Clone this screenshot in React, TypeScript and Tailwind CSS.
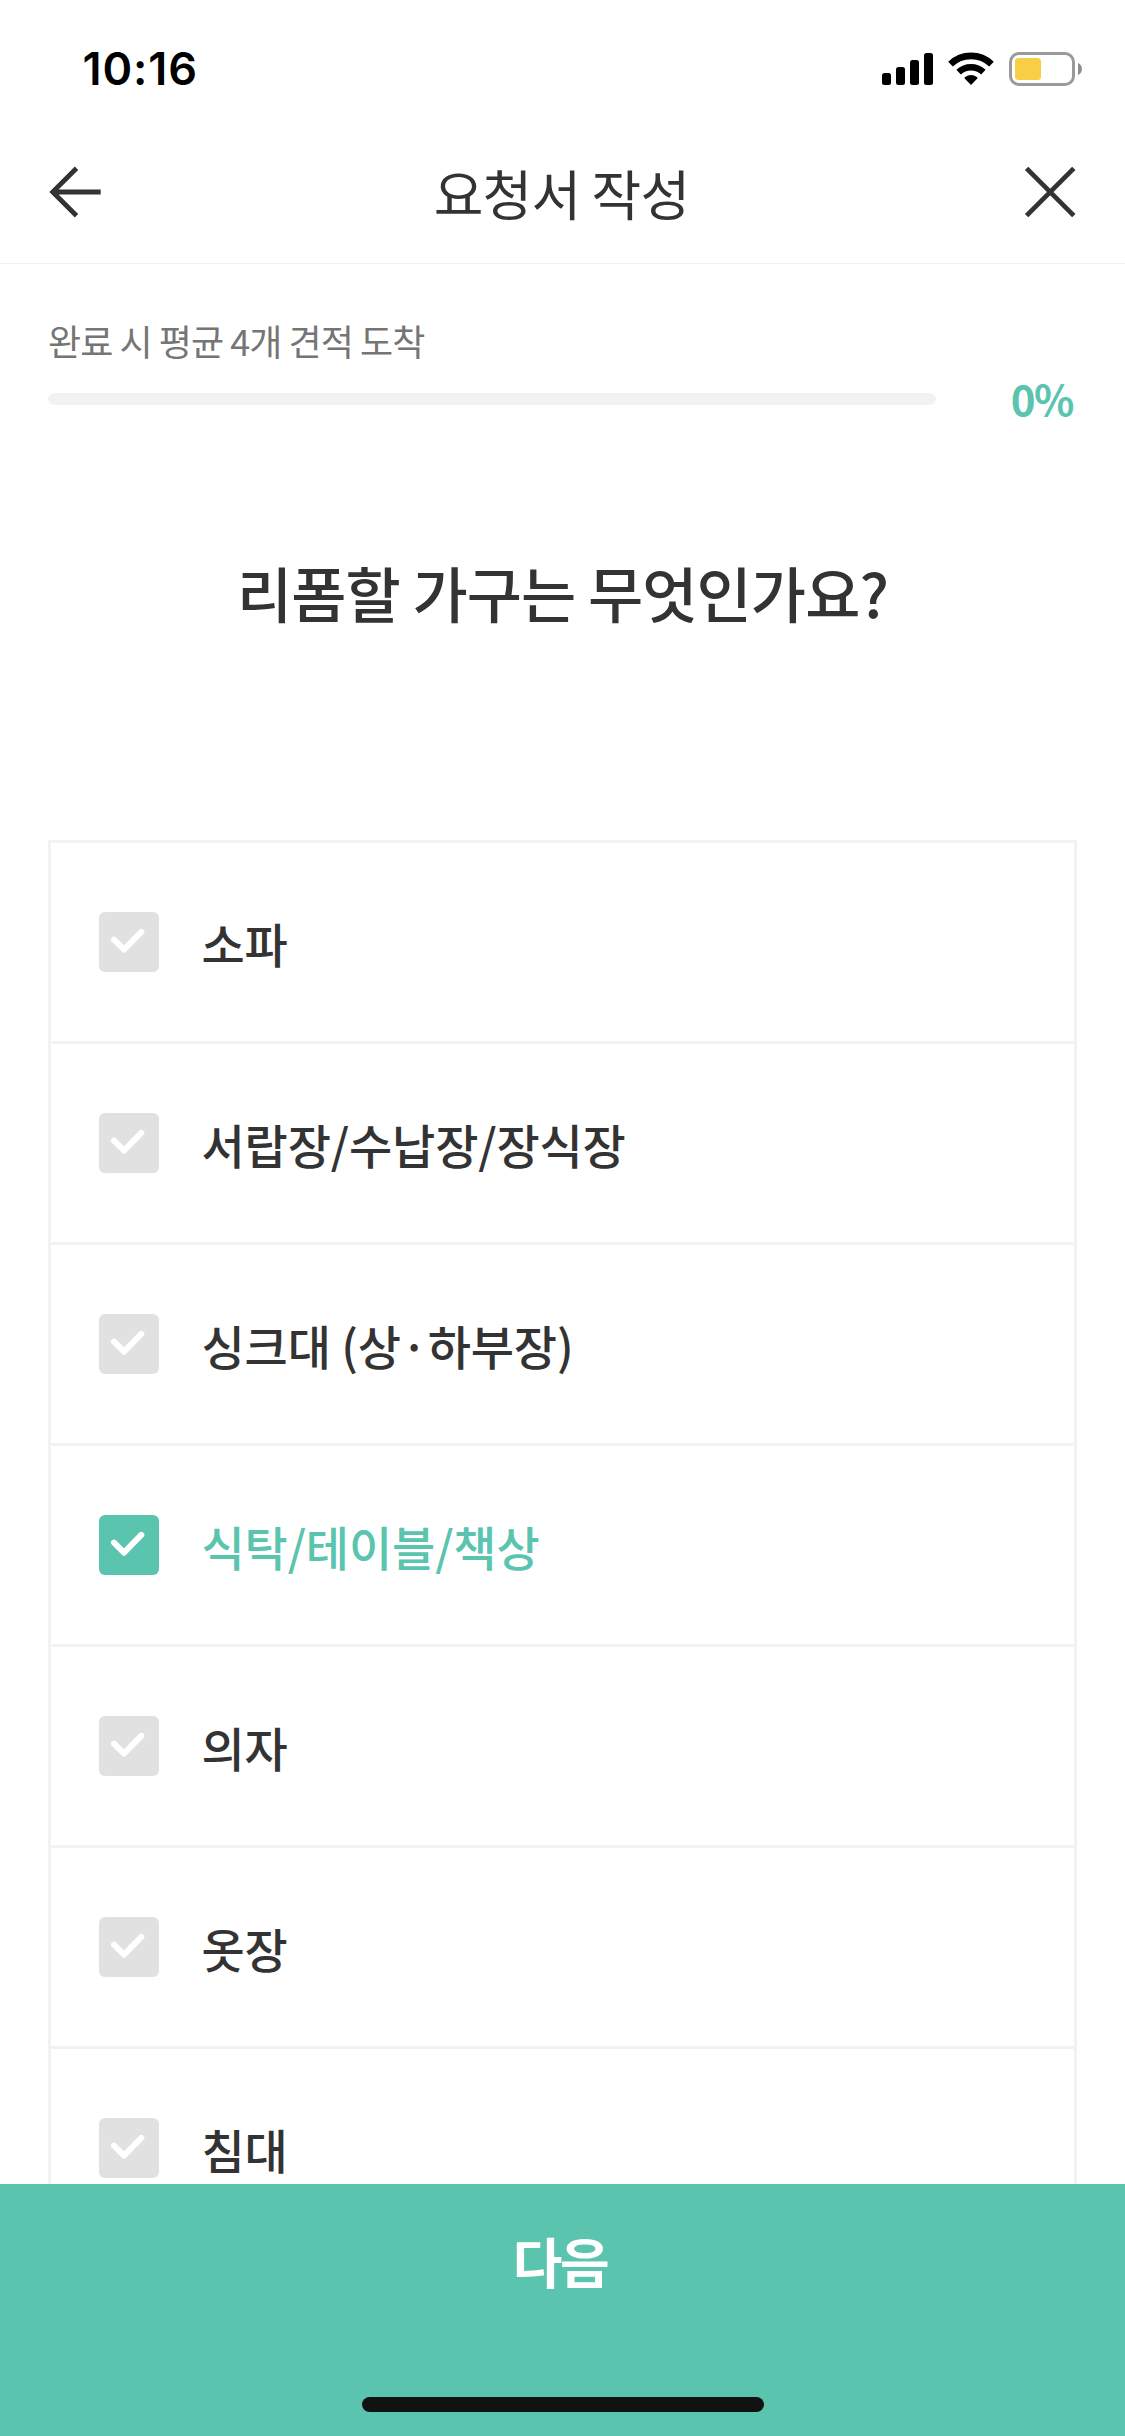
import React, { useState } from "react";

const OPTIONS = [
  "소파",
  "서랍장/수납장/장식장",
  "싱크대 (상·하부장)",
  "식탁/테이블/책상",
  "의자",
  "옷장",
  "침대",
];

const StatusBar: React.FC = () => (
  <div className="flex h-[132px] shrink-0 items-start justify-between pl-[82.5px] pr-[43px] pt-[52px]">
    <span className="font-['Inter',sans-serif] text-[45px] font-semibold leading-[34px] tracking-[0.9px] text-black">10:16</span>
    <div className="flex">
      {/* Signal */}
      <svg width="51" height="34" viewBox="0 0 51 34" className="mr-[15px]">
        <rect x="0" y="21" width="9" height="12" rx="2.5" />
        <rect x="14" y="15" width="9" height="18" rx="2.5" />
        <rect x="28" y="8" width="9" height="25" rx="2.5" />
        <rect x="42" y="1" width="9" height="32" rx="2.5" />
      </svg>
      {/* Wifi */}
      <svg width="46" height="34" viewBox="0 0 46 34" className="mr-[15px]">
        <path d="M2.5 12.1a29.6 29.6 0 0 1 41 0" fill="none" stroke="#000" strokeWidth="6.6" />
        <path d="M10.6 20.1a18.3 18.3 0 0 1 24.8 0" fill="none" stroke="#000" strokeWidth="6.6" />
        <path d="M23 33l-6.1-6.2c-.6-.6-.5-1.2.2-1.7 3.6-2.9 8.2-2.9 11.8 0 .7.5.8 1.1.2 1.7z" />
      </svg>
      {/* Battery */}
      <svg width="73" height="34" viewBox="0 0 73 34">
        <rect x="1.5" y="1.5" width="63" height="31" rx="8.5" fill="none" stroke="#9a9a9a" strokeWidth="3" />
        <rect x="6" y="6" width="26" height="22" rx="3.5" fill="#f7ce46" />
        <path d="M69 11c5.300 2 5.300 10 0 12z" fill="#8e8e8e" />
      </svg>
    </div>
  </div>
);

const Header: React.FC = () => (
  <header className="flex h-[132px] shrink-0 items-center justify-between border-b border-[#f2f2f2] px-[45px] pb-[11px]">
    <button aria-label="뒤로">
      <svg width="60" height="60" viewBox="0 0 60 60" fill="none" stroke="#333" strokeWidth="4.8">
        <path d="M31.500 6.200L7.700 30l23.800 23.800M7.700 30h48" />
      </svg>
    </button>
    <h1 className="pr-0.5 pt-0.5 text-[54px] leading-[60px] tracking-[-0.8px] text-[#333]">요청서 작성</h1>
    <button aria-label="닫기">
      <svg width="60" height="60" viewBox="0 0 60 60" fill="none" stroke="#333" strokeWidth="4.8">
        <path d="M6.600 6.400l47.200 47.200M53.800 6.400L6.600 53.600" />
      </svg>
    </button>
  </header>
);

const Progress: React.FC<{ percent: number }> = ({ percent }) => (
  <section className="shrink-0 px-12 pt-[52px]">
    <p className="text-[36px] leading-[48px] tracking-[-0.95px] text-[#757575]">완료 시 평균 4개 견적 도착</p>
    <div className="mt-[5px] flex h-[60px] items-center justify-between">
      <div className="h-3 w-[888px] overflow-hidden rounded-full bg-[#f2f2f2]">
        <div className="h-full bg-[#5bc4ae]" style={{ width: `${percent}%` }} />
      </div>
      <span className="pb-0.5 pr-1 text-[42px] font-bold leading-[58px] tracking-[-1.5px] text-[#5bc4ae]">{percent}%</span>
    </div>
  </section>
);

interface OptionProps {
  label: string;
  checked: boolean;
  onClick: () => void;
}

const Option: React.FC<OptionProps> = ({ label, checked, onClick }) => (
  <li
    onClick={onClick}
    className="flex h-[201px] cursor-pointer items-center border-b-[3px] border-[#f2f2f2] pl-12"
  >
    <span
      className={`flex size-[60px] items-center justify-center rounded-md ${checked ? "bg-[#5bc4ae]" : "bg-[#e1e1e1]"}`}
    >
      <svg width="60" height="60" viewBox="0 0 60 60" fill="none" stroke="#fff" strokeWidth="6" strokeLinecap="round" strokeLinejoin="round">
        <path d="M15 27.700l10 10 17.300-17.800" />
      </svg>
    </span>
    <span
      className={`ml-[42.5px] pt-0.5 text-[47px] font-medium leading-[72px] tracking-[-0.15px] ${checked ? "text-[#5bc4ae]" : "text-[#333]"}`}
    >
      {label}
    </span>
  </li>
);

const App: React.FC = () => {
  const [selected, setSelected] = useState<string[]>(["식탁/테이블/책상"]);

  const toggle = (label: string) => {
    setSelected((prev) => (prev.includes(label) ? prev.filter((l) => l !== label) : [...prev, label]));
  };

  return (
    <div className="flex h-[2436px] w-[1125px] flex-col overflow-hidden bg-white font-['Noto_Sans_CJK_KR',sans-serif]">
      <StatusBar />
      <Header />
      <Progress percent={0} />

      <h2 className="mt-[123px] shrink-0 text-center text-[60px] font-medium leading-[80px] tracking-[-0.9px] text-[#333]">
        리폼할 가구는 무엇인가요?
      </h2>

      <main className="mt-52 min-h-0 flex-1 overflow-hidden px-12">
        <ul className="border-x-[3px] border-t-[3px] border-[#f2f2f2]">
          {OPTIONS.map((label) => (
            <Option key={label} label={label} checked={selected.includes(label)} onClick={() => toggle(label)} />
          ))}
        </ul>
      </main>

      {/* Bottom button + home indicator */}
      <footer className="flex h-[252px] shrink-0 flex-col items-center justify-between bg-[#5bc4ae] pb-6">
        <button className="h-[150px] w-full pr-[5px] pt-0.5 text-[54px] font-bold tracking-[-2.5px] text-white">다음</button>
        <div className="h-[15px] w-[402px] rounded-full bg-[#121212]" />
      </footer>
    </div>
  );
};

export default App;
